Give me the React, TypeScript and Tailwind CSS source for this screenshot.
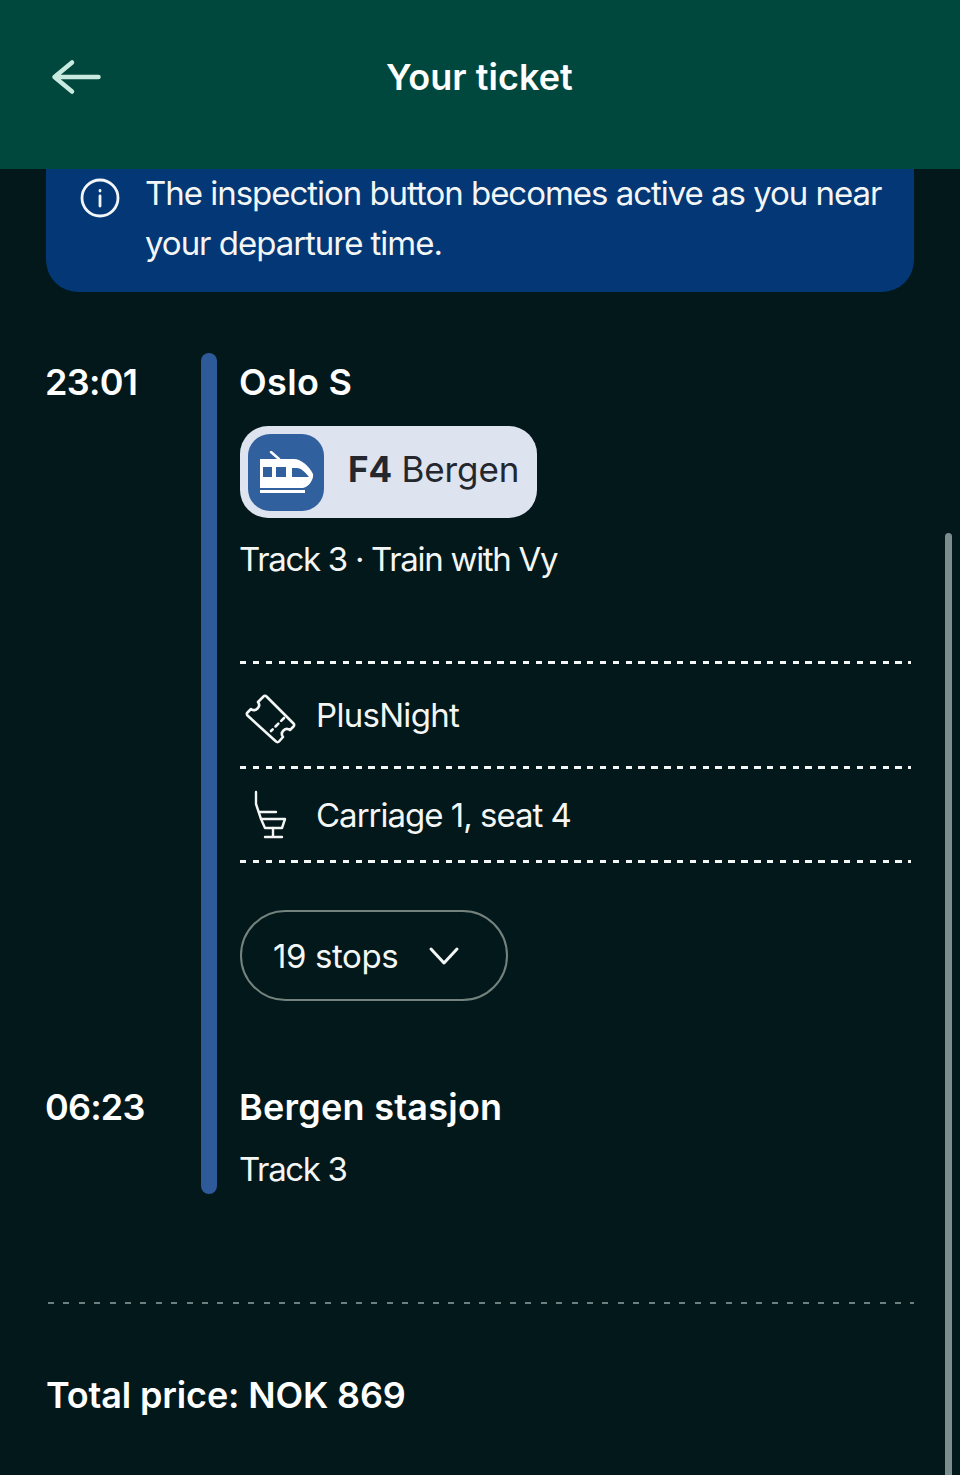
import React from 'react';

const Dashes: React.FC<{ className?: string }> = ({ className = '' }) => (
  <div className={`h-[3px] bg-[repeating-linear-gradient(90deg,#f4f6f5_0,#f4f6f5_6.500px,transparent_6.500px,transparent_12.85px)] ${className}`} />
);

const BackArrow = () => (
  <svg width="50" height="36" viewBox="0 0 50 36" fill="none" stroke="#c9ebdf" strokeWidth="4.500" strokeLinecap="round" strokeLinejoin="round">
    <path d="M47.500 18H4M21 3.500 3.500 18 21 32.500" />
  </svg>
);

const InfoIcon = () => (
  <svg width="40" height="40" viewBox="0 0 40 40" fill="none" stroke="#f2f6f8" strokeWidth="2.800" strokeLinecap="round">
    <circle cx="20" cy="20" r="18" />
    <path d="M20 18v10M20 12.500v.6" strokeWidth="2.800" />
  </svg>
);

const TrainIcon = () => (
  <svg width="56" height="44" viewBox="0 0 56 44">
    <path d="M12 1 20 8" stroke="#fff" strokeWidth="2.500" strokeLinecap="round" fill="none" />
    <path d="M1 8H35C42 8 50 15 54 23C55 28 50 36 44 37H1Z" fill="#fff" />
    <rect x="4" y="16" width="9" height="10" fill="#31609f" />
    <rect x="17" y="16" width="10" height="10" fill="#31609f" />
    <path d="M33 17H38C42 17 46 21 50 26H33Z" fill="#31609f" />
    <rect x="1" y="39" width="45" height="3" fill="#fff" />
  </svg>
);

const TicketIcon = () => (
  <svg width="52" height="52" viewBox="0 0 52 52" fill="none" stroke="#f4f6f5" strokeWidth="2.600" strokeLinecap="round" strokeLinejoin="round">
    <path d="M18.500 2.500a2 2 0 0 1 3 0L48.500 29.500a2 2 0 0 1 0 3L45 36a5 5 0 0 0-7 7L34 47.500a2 2 0 0 1-3 0L2.500 21.500a2 2 0 0 1 0-3L6 15a5 5 0 0 0 7-7Z" />
    <path d="M39 24 26 37" strokeDasharray="4 4" />
  </svg>
);

const SeatIcon = () => (
  <svg width="34" height="50" viewBox="0 0 34 50" fill="none" stroke="#f4f6f5" strokeWidth="2.400" strokeLinecap="round" strokeLinejoin="round">
    <path d="M2 2v12l5 15h24l-3 9H11L7 29" />
    <path d="M5 22h17" />
    <path d="M19 38v9M11 47h17" />
  </svg>
);

const ChevronIcon = () => (
  <svg width="34" height="22" viewBox="0 0 34 22" fill="none" stroke="#f4f6f5" strokeWidth="3" strokeLinecap="round" strokeLinejoin="round">
    <path d="M3 4 16 18 29 4" />
  </svg>
);

const App: React.FC = () => {
  return (
    <div className="relative h-[1475px] w-[960px] overflow-hidden bg-[#02181a] font-['Inter',sans-serif] text-[#f4f6f5]">
      <header className="flex h-[169px] items-center bg-[#00483e] pb-[15px] pl-[51px]">
        <BackArrow />
        <h1 className="ml-[285px] pb-[1px] text-[36px] font-semibold tracking-[0.05px] text-white">Your ticket</h1>
      </header>

      <div className="mx-[46px] flex h-[123px] gap-[26px] rounded-b-[32px] bg-[#033775] pl-[34px] text-[33px] leading-[50px] tracking-[-1.030px]">
        <div className="pt-[9px]"><InfoIcon /></div>
        <p className="-ml-[1px] -mt-[1px] whitespace-pre">{'The inspection button becomes active as you near\nyour departure time.'}</p>
      </div>

      <div className="mx-[46px] mt-[61px] grid grid-cols-[155px_16px_1fr] grid-rows-[auto_auto] gap-x-0">
        <div className="-ml-[1px] pt-[7px] text-[36px] font-semibold leading-[44px] tracking-[-0.7px] text-white">23:01</div>
        <div className="row-span-2 rounded-full bg-[#2f5a9a]" />
        <div className="pl-[23px] pr-[3px]">
          <div className="-ml-[1px] pt-[7px] text-[36px] font-semibold leading-[44px] tracking-[0.35px] text-white">Oslo S</div>
          <div className="mt-[22px] flex h-[92px] w-[297px] items-center rounded-[28px] bg-[#dde3ef] pl-[8px]">
            <div className="flex h-[77px] w-[76px] items-center justify-center rounded-[22px] bg-[#31609f] pl-[1px] pt-[1px]"><TrainIcon /></div>
            <div className="ml-[24px] pb-[5px] text-[35px] tracking-[-0.15px] text-[#24272e]"><span className="font-bold">F4</span> Bergen</div>
          </div>
          <div className="-ml-[1px] mt-[16px] text-[33px] leading-[50px] tracking-[-1.3px]">Track 3 · Train with Vy</div>
          <Dashes className="mt-[77px]" />
          <div className="flex h-[102px] items-center gap-[20px] pl-[5px]">
            <div className="pt-[10px]"><TicketIcon /></div>
            <span className="-ml-[1px] pt-[2px] text-[33px] tracking-[-0.7px]">PlusNight</span>
          </div>
          <Dashes />
          <div className="flex h-[91px] items-center pl-[14px]">
            <SeatIcon />
            <span className="ml-[28px] pt-[2px] text-[33px] tracking-[-1px]">Carriage 1, seat 4</span>
          </div>
          <Dashes />
          <button className="mt-[47px] flex h-[91px] w-[268px] items-center gap-[30px] rounded-full border-[2.5px] border-[#75837f] pl-[31px] text-[33px] tracking-[-0.4px]">
            <span className="pt-[2px]">19 stops</span> <ChevronIcon />
          </button>
        </div>

        <div className="-ml-[1px] pt-[84px] text-[36px] font-semibold leading-[44px] tracking-[-0.8px] text-white">06:23</div>
        <div className="pl-[23px]">
          <div className="-ml-[1px] pt-[84px] text-[36px] font-semibold leading-[44px] tracking-[0.25px] text-white">Bergen stasjon</div>
          <div className="-ml-[1px] pt-[15px] text-[33px] leading-[50px] tracking-[-1.35px]">Track 3</div>
        </div>
      </div>

      <div className="ml-[48px] mr-[46px] mt-[108px] h-[2px] bg-[repeating-linear-gradient(90deg,#6e7f7d_0,#6e7f7d_6px,transparent_6px,transparent_15.4px)]" />
      <div className="ml-[46px] mt-[69px] text-[36px] font-semibold leading-[44px] tracking-[-0.15px] text-white">Total price: NOK 869</div>

      <div className="absolute bottom-0 right-[8px] top-[533px] w-[7px] rounded-t-full bg-[#7d8c8c]" />
    </div>
  );
};

export default App;
